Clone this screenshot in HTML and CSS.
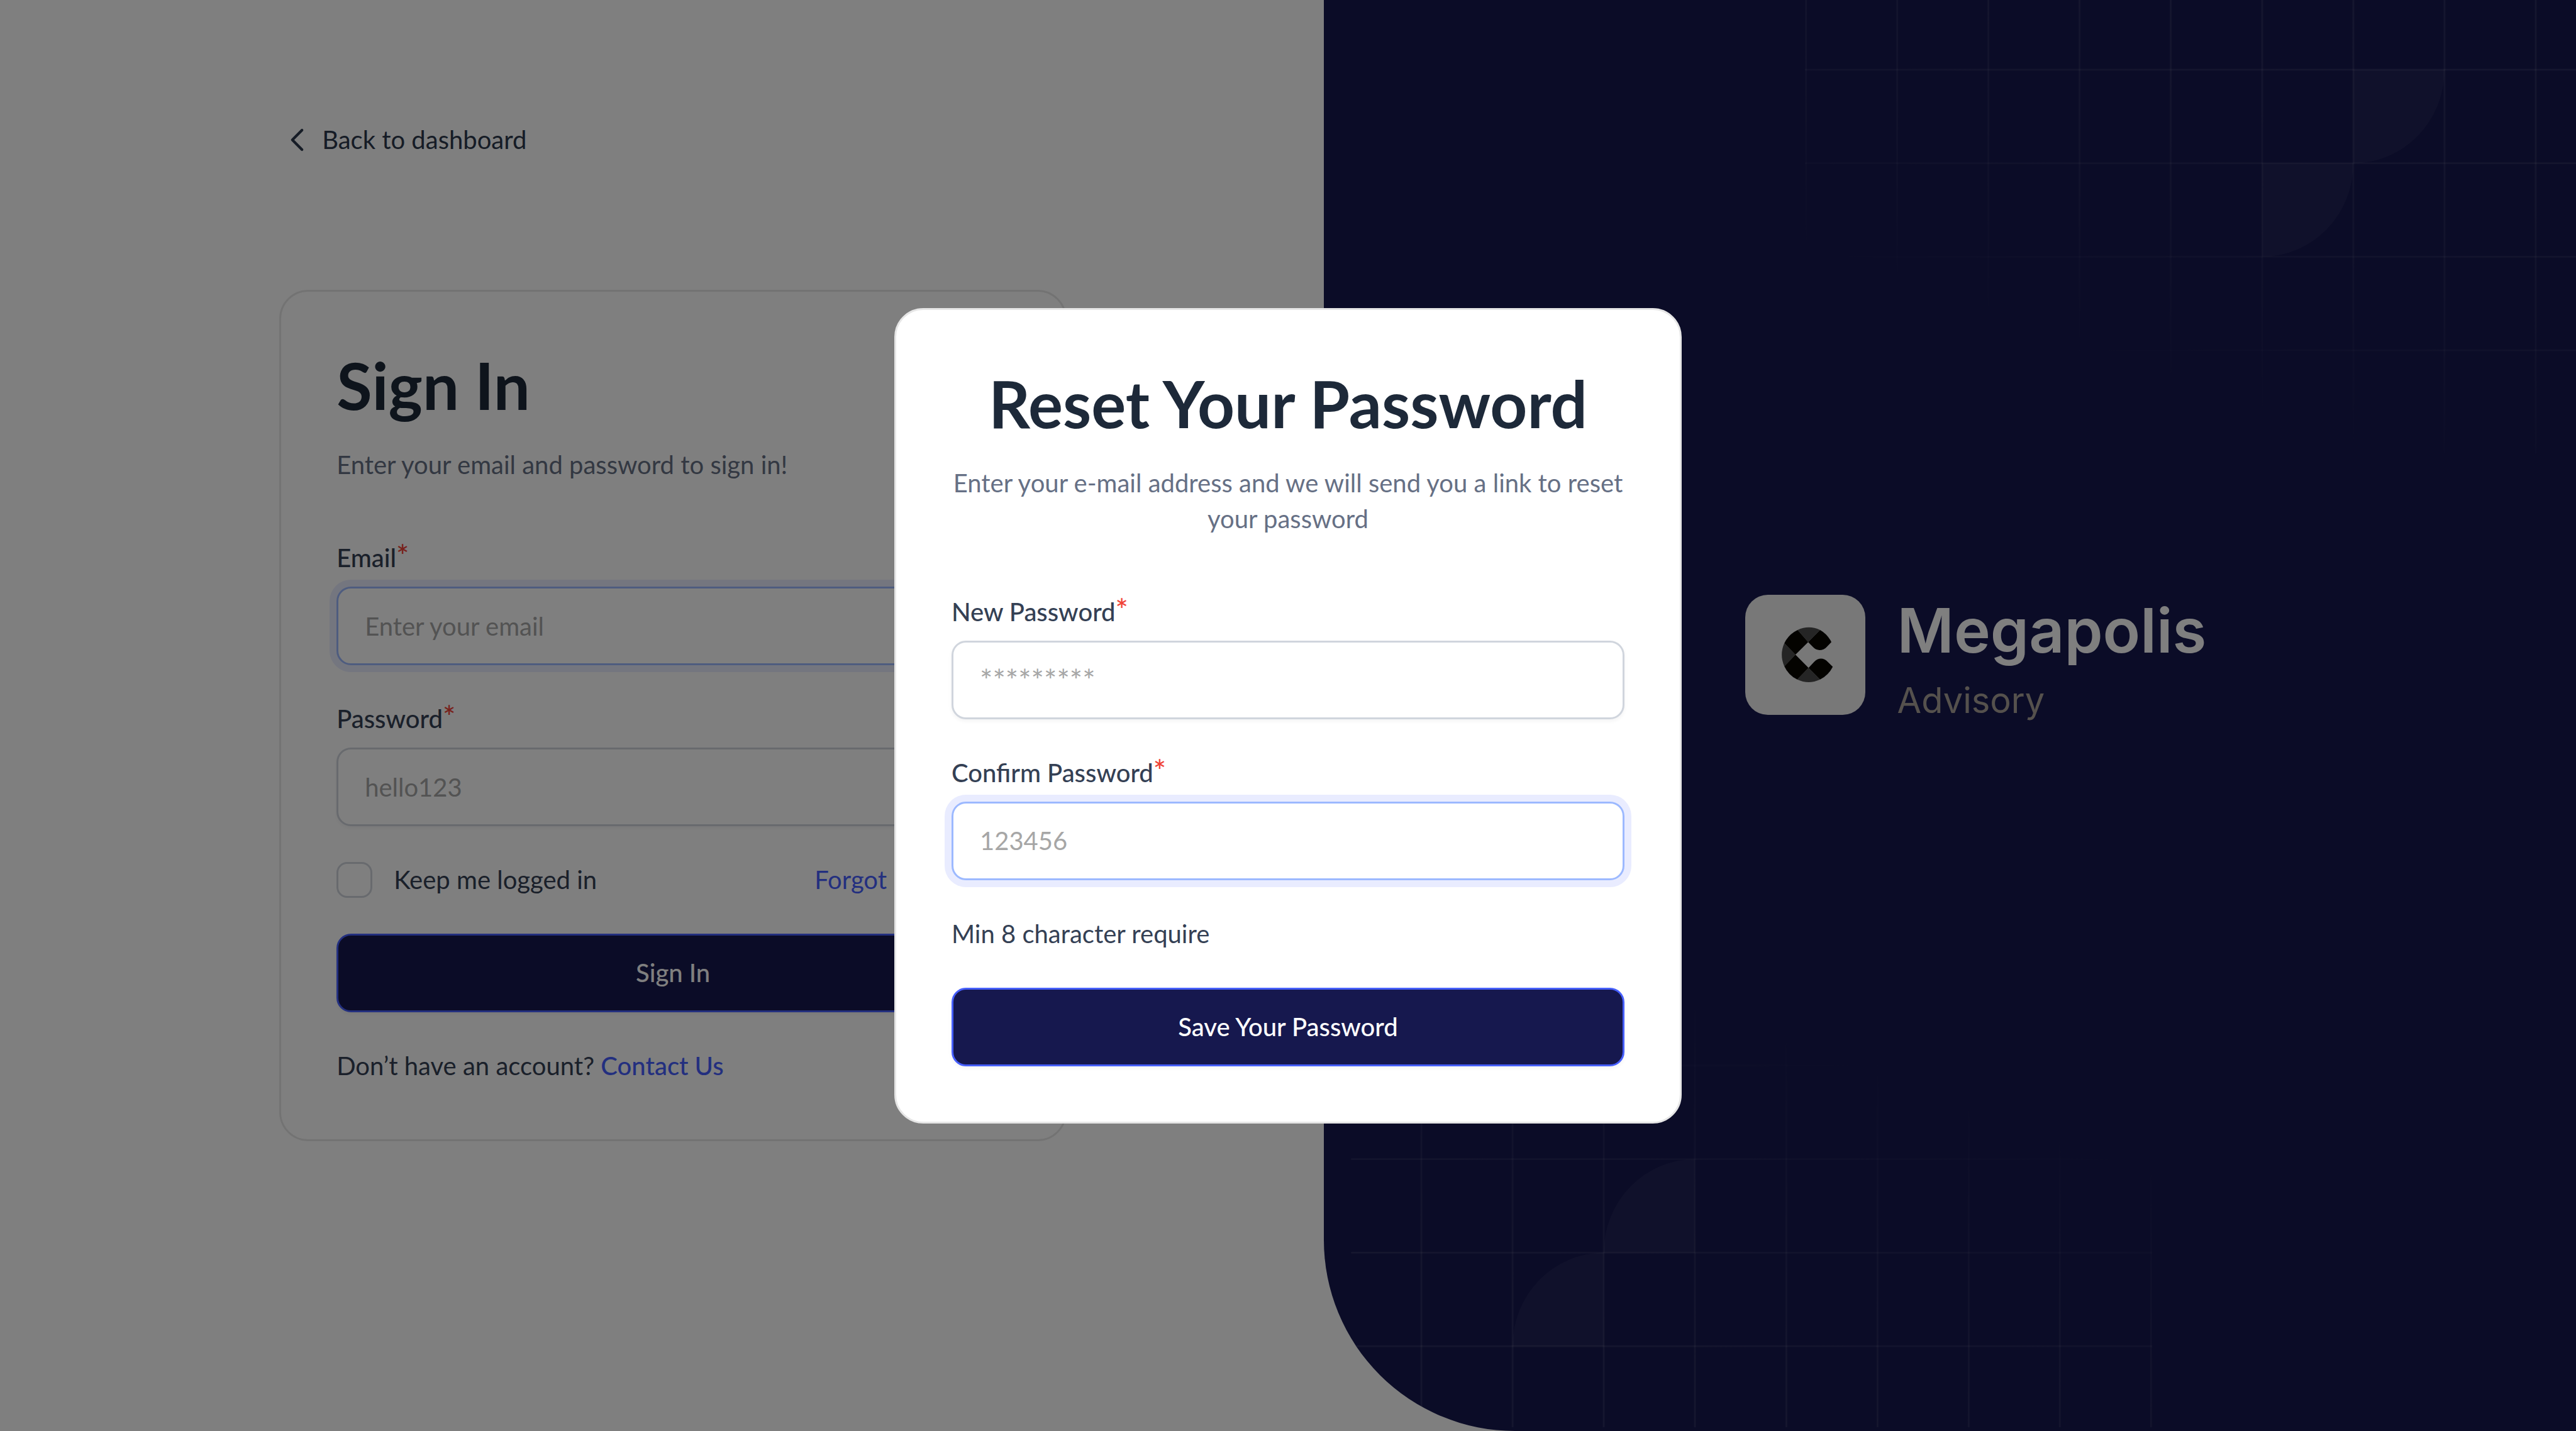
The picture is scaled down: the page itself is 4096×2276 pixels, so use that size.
FILE: index.html
```html
<!DOCTYPE html>
<html lang="en">
<head>
<meta charset="utf-8">
<meta name="viewport" content="width=device-width, initial-scale=1">
<title>Reset Your Password</title>
<link rel="stylesheet" href="styles.css">
</head>
<body>
<svg class="defs" aria-hidden="true">
  <defs>
    <linearGradient id="fade" gradientUnits="userSpaceOnUse" x1="604" y1="9" x2="390" y2="600">
      <stop offset="0" stop-color="#fff" stop-opacity="0.09"/>
      <stop offset="0.5" stop-color="#fff" stop-opacity="0.06"/>
      <stop offset="1" stop-color="#fff" stop-opacity="0"/>
    </linearGradient>
    <symbol id="grid" viewBox="0 0 1344 780">
      <g fill="none" stroke="url(#fade)" stroke-width="3">
        <path d="M1.5 0V780M154.5 0V780M307.5 0V780M460.500 0V780M613.500 0V780M767 0V780M920 0V780M1073 0V780M1226 0V780"/>
        <path d="M0 136H1344M0 293H1344M0 450H1344M0 607H1344"/>
      </g>
      <path fill="#fff" fill-opacity="0.05" d="M920 136H1073A153 157 0 0 1 920 293ZM767 293H920A153 157 0 0 1 767 450Z"/>
    </symbol>
  </defs>
</svg>

<main class="page">
  <section class="auth">
    <a class="back" href="#">
      <svg class="back-icon" viewBox="0 0 20 20" fill="none" stroke="currentColor" stroke-width="1.5" stroke-linecap="round" stroke-linejoin="round" aria-hidden="true"><path d="M12.700 4.600 7.300 10l5.400 5.400"/></svg>
      Back to dashboard
    </a>
    <form class="card">
      <h1 class="title">Sign In</h1>
      <p class="lead">Enter your email and password to sign in!</p>
      <div class="fields">
        <div class="field">
          <label class="label" for="email">Email<span class="required">*</span></label>
          <input class="input input-active" id="email" type="email" placeholder="Enter your email">
        </div>
        <div class="field">
          <label class="label" for="password">Password<span class="required">*</span></label>
          <input class="input" id="password" type="password" placeholder="hello123">
        </div>
        <div class="options">
          <label class="keep"><input class="checkbox" type="checkbox">Keep me logged in</label>
          <a class="link" href="#">Forgot password?</a>
        </div>
        <button class="button" type="button">Sign In</button>
        <p class="text">Don’t have an account? <a class="link link-strong" href="#">Contact Us</a></p>
      </div>
    </form>
  </section>

  <aside class="brand-panel">
    <svg class="grid grid-top" aria-hidden="true"><use href="#grid"/></svg>
    <svg class="grid grid-bottom" aria-hidden="true"><use href="#grid"/></svg>
    <div class="brand">
      <svg class="brand-logo" viewBox="25 24 605 605" aria-hidden="true">
        <rect x="25" y="24" width="605" height="605" rx="114" fill="#f0f0f0"/>
        <g fill="#4a4a4a">
          <path d="M289 201A139 141 0 0 1 402 201L342 262Z"/>
          <path d="M222 268A139 141 0 0 0 222 384L278 326Z"/>
          <path d="M287 451A139 141 0 0 0 402 451L344 392Z"/>
        </g>
        <g fill="#080600">
          <path d="M289 201 342 262 278 326 222 268A139 141 0 0 1 289 201Z"/>
          <path d="M278 326 344 392 287 451A139 141 0 0 1 222 384Z"/>
          <path d="M342 262 402 201A139 141 0 0 1 459 262L437 285C418 307 385 309 367 288Z"/>
          <path d="M344 392 372 362C391 341 420 339 440 361L466 387A139 141 0 0 1 402 451Z"/>
        </g>
      </svg>
      <div class="brand-text">
        <span class="brand-name">Megapolis</span>
        <span class="brand-sub">Advisory</span>
      </div>
    </div>
  </aside>
</main>

<div class="overlay">
  <form class="card modal" role="dialog" aria-modal="true" aria-labelledby="reset-title">
    <h2 class="title" id="reset-title">Reset Your Password</h2>
    <p class="lead">Enter your e-mail address and we will send you a link to reset your password</p>
    <div class="fields">
      <div class="field">
        <label class="label" for="new-password">New Password<span class="required">*</span></label>
        <input class="input input-masked" id="new-password" type="password" placeholder="*********">
      </div>
      <div class="field">
        <label class="label" for="confirm-password">Confirm Password<span class="required">*</span></label>
        <input class="input input-active" id="confirm-password" type="password" placeholder="123456">
      </div>
      <p class="text">Min 8 character require</p>
      <button class="button" type="button">Save Your Password</button>
    </div>
  </form>
</div>
</body>
</html>
```
FILE: styles.css
```css
* {
  box-sizing: border-box;
}

body {
  margin: 0;
  background: #fff;
  color: #344054;
  font-family: Lato, "Liberation Sans", sans-serif;
  font-size: 40px;
  line-height: 57px;
}

h1, h2, p {
  margin: 0;
}

.defs {
  position: absolute;
  width: 0;
  height: 0;
}

.page {
  display: grid;
  grid-template-columns: 37fr 35fr;
  min-height: 100vh;
}

.auth {
  display: flex;
  flex-direction: column;
  align-items: flex-start;
  gap: 210px;
  padding: 194px 0 194px 21.1%;
}

.back {
  display: flex;
  align-items: center;
  gap: 11px;
  color: #2c384c;
  text-decoration: none;
}

.back-icon {
  width: 57px;
  height: 57px;
}

.card {
  width: 1252px;
  padding: 88px;
  border: 3px solid #e6e6e6;
  border-radius: 46px;
  background: #fff;
}

.title {
  margin-bottom: 38px;
  color: #1d2939;
  font-size: 103px;
  font-weight: 700;
  line-height: 121px;
}

.lead {
  margin-bottom: 91px;
  color: #667085;
}

.fields {
  display: flex;
  flex-direction: column;
  gap: 57px;
}

.field {
  display: flex;
  flex-direction: column;
  gap: 17px;
}

.label {
  height: 57px;
  font-weight: 500;
}

.required {
  color: #f04438;
  font-size: 48px;
  line-height: 40px;
}

.input {
  width: 100%;
  height: 125px;
  padding: 0 42px;
  border: 3px solid #d0d5dd;
  border-radius: 23px;
  outline: none;
  background: #fff;
  box-shadow: 0 3px 6px rgba(16, 24, 40, 0.05);
  color: #344054;
  font: inherit;
}

.input::placeholder {
  color: #a6a6a6;
  opacity: 1;
}

.input-active {
  border-color: #9cb9ff;
  box-shadow: 0 0 0 11px #e9ecff;
}

.input-masked {
  font-size: 48px;
}

.options {
  display: flex;
  align-items: center;
  justify-content: space-between;
}

.keep {
  display: flex;
  align-items: center;
  gap: 34px;
}

.checkbox {
  width: 57px;
  height: 57px;
  margin: 0;
  border: 3px solid #d0d5dd;
  border-radius: 17px;
  appearance: none;
}

.link {
  color: #465fff;
  text-decoration: none;
}

.link-strong {
  font-weight: 500;
}

.button {
  width: 100%;
  height: 125px;
  border: 3px solid #465fff;
  border-radius: 23px;
  background: #16184e;
  box-shadow: 0 3px 6px rgba(16, 24, 40, 0.05);
  color: #fff;
  font: inherit;
  font-weight: 500;
}

.brand-panel {
  position: relative;
  display: flex;
  align-items: center;
  justify-content: center;
  padding: 0 0 182px 82px;
  overflow: hidden;
  border-bottom-left-radius: 304px;
  background: #16184e;
}

.grid {
  position: absolute;
  width: 1274px;
  height: 739px;
}

.grid-top {
  top: -18px;
  right: -48px;
}

.grid-bottom {
  bottom: 6px;
  left: 43px;
  transform: rotate(180deg);
}

.brand {
  display: flex;
  align-items: flex-start;
  gap: 51px;
}

.brand-logo {
  width: 191px;
  height: 191px;
}

.brand-text {
  display: flex;
  flex-direction: column;
  gap: 20px;
  font-family: Inter, "Liberation Sans", sans-serif;
}

.brand-name {
  color: #fff;
  font-size: 98px;
  font-weight: 600;
  line-height: 114px;
}

.brand-sub {
  color: #aaa29a;
  font-size: 56px;
  line-height: 68px;
}

.overlay {
  position: fixed;
  inset: 0;
  display: flex;
  align-items: center;
  justify-content: center;
  background: rgba(0, 0, 0, 0.5);
}

.modal .title,
.modal .lead {
  text-align: center;
}
```
